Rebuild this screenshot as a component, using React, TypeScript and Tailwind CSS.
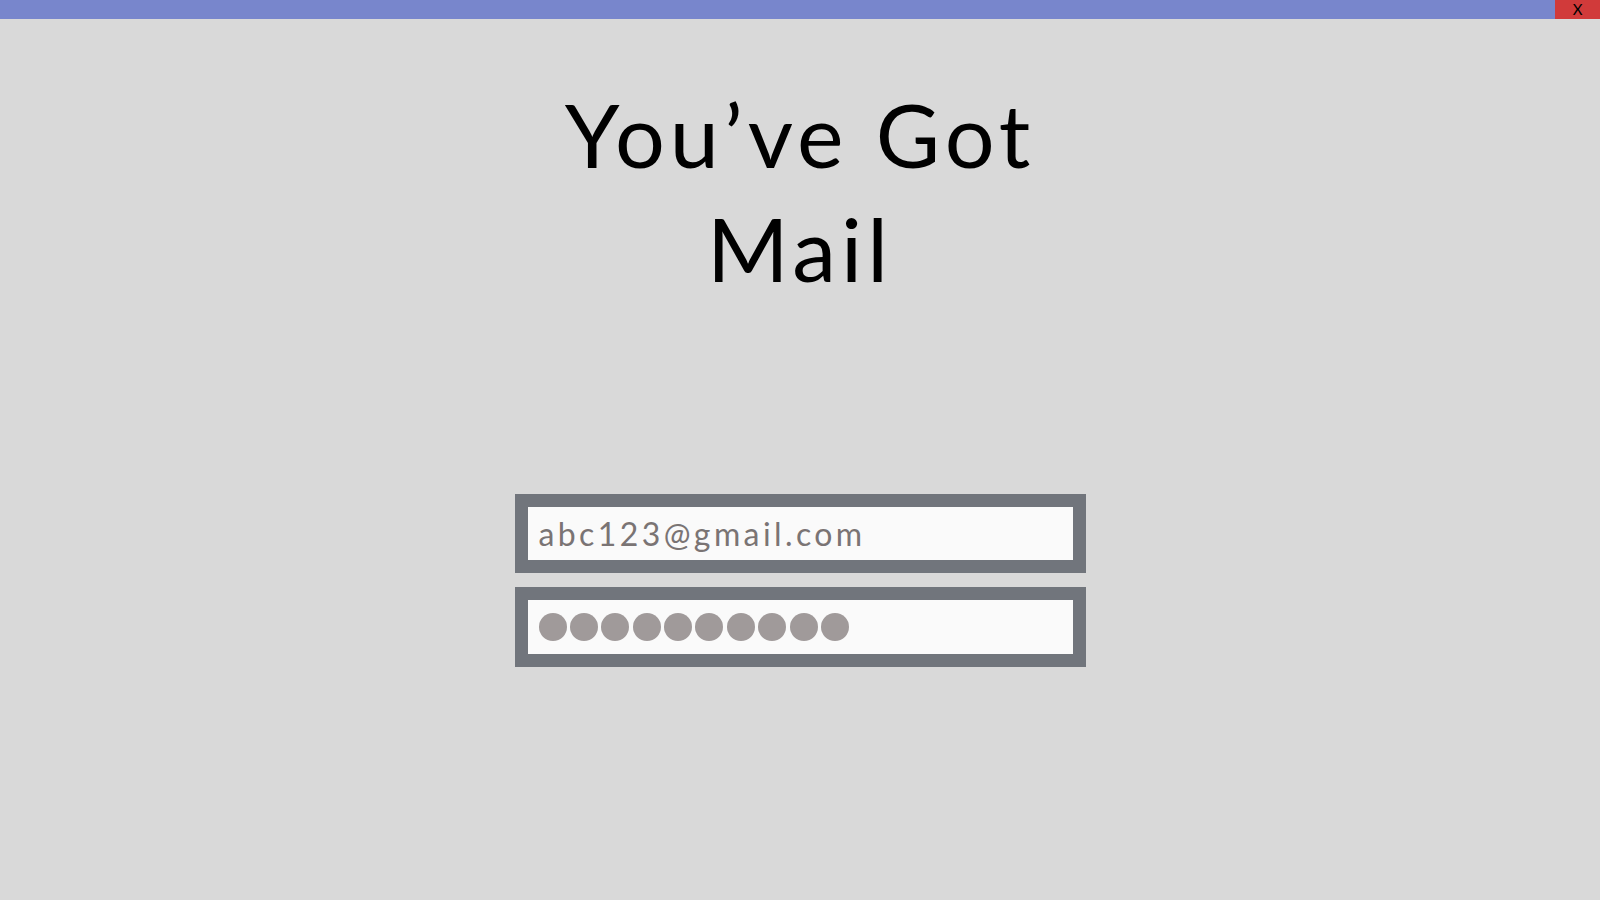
const App = () => {
  const dots = Array.from({ length: 10 })

  return (
    <div className="min-h-screen w-full bg-[#d9d9d9] flex flex-col" style={{ fontFamily: 'Lato, "Noto Sans", sans-serif' }}>

      <header className="h-[19px] bg-[#7886cc] flex justify-end">
        <button className="w-[45px] h-[19px] bg-[#d13a3a] flex items-center justify-center text-[15px] leading-none text-black">
          X
        </button>
      </header>

      <main className="flex flex-col items-center">
        <h1 className="mt-[58px] text-center text-[88px] leading-[114px] tracking-[5px] font-normal text-black">
          You’ve Got
          <br />
          Mail
        </h1>

        <div className="mt-[189px] flex flex-col gap-[14px]">
          <div className="w-[571px] h-[79px] border-[13px] border-[#71757c] bg-[#fafafa] flex items-center px-[11px]">
            <span className="text-[32px] tracking-[3.4px] text-[#7a7474]">abc123@gmail.com</span>
          </div>

          <div className="w-[571px] h-[80px] border-[13px] border-[#71757c] bg-[#fafafa] flex items-center px-[11px] gap-[3.4px]">
            {dots.map((_, i) => (
              <span key={i} className="w-[28px] h-[28px] rounded-full bg-[#a09a9a]" />
            ))}
          </div>
        </div>
      </main>
    </div>
  )
}

export default App
